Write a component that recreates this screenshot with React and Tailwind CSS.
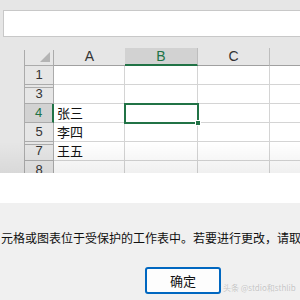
const font = { fontFamily: '"Liberation Sans", "Noto Sans CJK SC", sans-serif' }

const cols = [
  { key: 'A', w: 'w-[71px]' },
  { key: 'B', w: 'w-[73px]' },
  { key: 'C', w: 'w-[72px]' },
]

const rows = [
  { n: '1', a: '' },
  { n: '3', a: '', hidden: true },
  { n: '4', a: '张三', active: true },
  { n: '5', a: '李四' },
  { n: '7', a: '王五', hidden: true },
  { n: '8', a: '' },
]

const App = () => {
  return (
    <div className="relative w-[300px] h-[300px] overflow-hidden bg-[#e6e6e6]" style={font}>
      {/* formula bar */}
      <div className="pt-[10px] pl-[3px]">
        <div className="h-[27px] bg-white border border-r-0 border-[#c8c8c8]" />
      </div>

      {/* sheet */}
      <div className="relative mt-[11px] h-[125px] overflow-hidden">
        <div className="flex h-[18px]">
          <div className="w-[24px] shrink-0" />
          <div className="relative w-[30px] shrink-0 border-l border-r border-b border-[#ababab] mt-[2px] h-[16px]">
            <div className="absolute right-[3px] bottom-[3px] w-0 h-0 border-l-[10px] border-l-transparent border-b-[10px] border-b-[#b4b4b4]" />
          </div>
          {cols.map(c => (
            <div key={c.key}
              className={`${c.w} shrink-0 flex items-center justify-center text-[14px] ${c.key === 'B' ? 'bg-[#d2d2d2] text-[#217346] border-b-2 border-[#217346]' : 'text-[#333] border-b border-[#a0a0a0]'} ${c.key === 'A' ? '' : 'border-r border-r-[#bdbdbd]'}`}>
              {c.key}
            </div>
          ))}
          <div className="flex-1 border-b border-[#a0a0a0]" />
        </div>

        {rows.map(r => (
          <div key={r.n} className="flex h-[19px]">
            <div className="w-[24px] shrink-0" />
            <div className={`w-[30px] shrink-0 flex items-center justify-center text-[13px] border-l border-b border-[#ababab] ${r.hidden ? 'shadow-[inset_0_2px_0_#e6e6e6,inset_0_3px_0_#ababab]' : ''} ${r.active ? 'bg-[#d2d2d2] text-[#217346] border-r-2 border-r-[#217346]' : 'text-[#333] border-r border-r-[#ababab]'}`}>
              {r.n}
            </div>
            <div className="w-[71px] shrink-0 bg-white border-b border-r border-[#d4d4d4] pl-[3px] text-[13px] leading-[19px] text-[#111]">{r.a}</div>
            <div className="w-[73px] shrink-0 bg-white border-b border-r border-[#d4d4d4]" />
            <div className="w-[72px] shrink-0 bg-white border-b border-r border-[#d4d4d4]" />
            <div className="flex-1 bg-white border-b border-[#d4d4d4]" />
          </div>
        ))}

        {/* selection B4 */}
        <div className="absolute left-[124px] top-[55px] w-[75px] h-[21px] border-2 border-[#217346]" />
        <div className="absolute left-[195px] top-[72px] w-[6px] h-[6px] bg-[#217346] border border-white" />

        {/* dialog shadow fade */}
        <div className="absolute left-0 right-0 top-[94px] h-[31px] bg-gradient-to-b from-transparent to-black/[0.06]" />
      </div>

      {/* white band */}
      <div className="h-[30px] bg-white" />

      {/* dialog body */}
      <div className="h-[97px] bg-[#f0f0f0] pt-[27px]">
        <div className="whitespace-nowrap overflow-hidden text-[12px] leading-[16px] text-[#111] pl-[1px]" style={{ fontFamily: '"Noto Sans CJK SC", sans-serif' }}>
          元格或图表位于受保护的工作表中。若要进行更改，请取消
        </div>
        <div className="mt-[21px] ml-[145px] w-[76px] h-[27px] rounded-[3px] border-2 border-[#0067c0] bg-[#fdfdfd] flex items-center justify-center text-[13px] text-[#111]" style={{ fontFamily: '"Noto Sans CJK SC", sans-serif' }}>
          确定
        </div>
      </div>

      {/* watermark */}
      <div className="absolute left-[223px] top-[282px] whitespace-nowrap text-[8px] leading-[11px] text-[#c4c4c4] [text-shadow:0_0_1px_#ffffff]" style={{ fontFamily: '"Noto Sans CJK SC", sans-serif' }}>
        头条 @stdio和sthlib
      </div>
    </div>
  )
}

export default App
